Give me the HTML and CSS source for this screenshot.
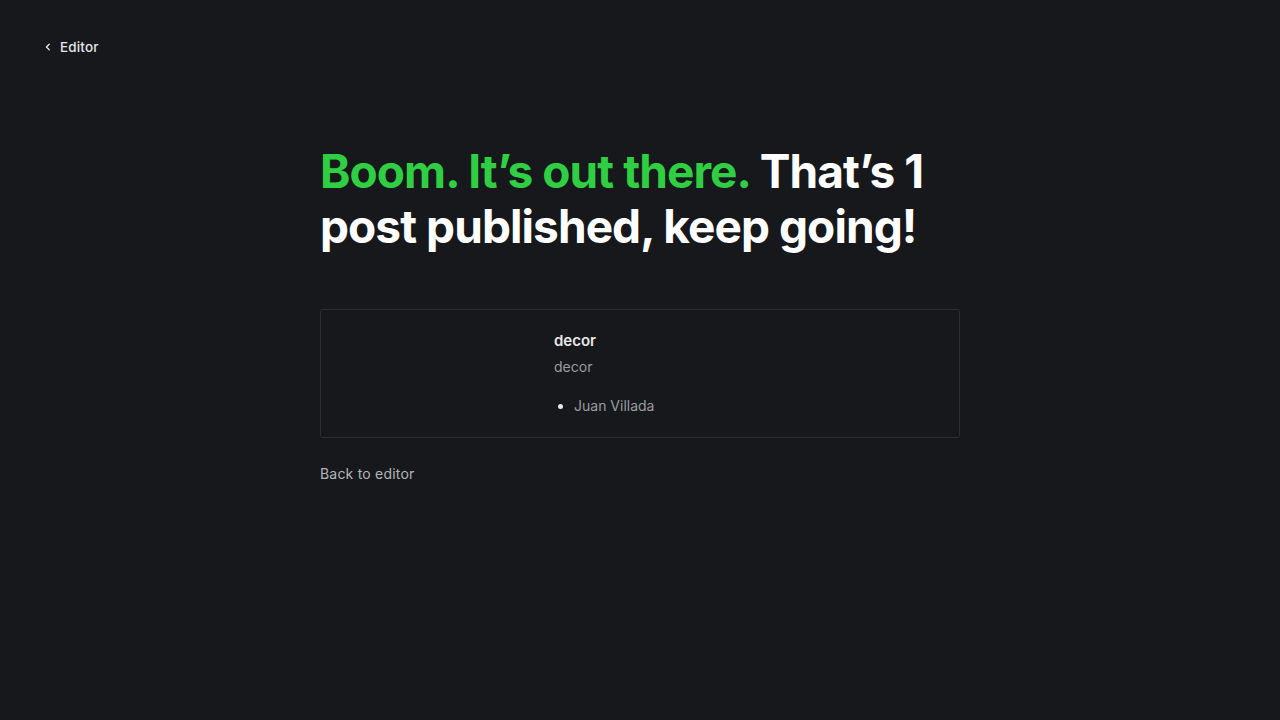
FILE: index.html
```html
<!DOCTYPE html>
<html lang="en">
<head>
<meta charset="utf-8">
<title>Published</title>
<link rel="stylesheet" href="styles.css">
</head>
<body>
  <header class="topbar">
    <a class="back-link" href="#">
      <svg class="chev" width="8" height="8" viewBox="0 0 8 8" aria-hidden="true"><path d="M5.2 1.2 2.4 4l2.8 2.8" fill="none" stroke="currentColor" stroke-width="1.3" stroke-linecap="round" stroke-linejoin="round"/></svg>
      <span>Editor</span>
    </a>
  </header>
  <main class="main">
    <h1 class="headline"><span class="accent">Boom. It’s out there.</span> <span class="rest">That’s 1 post published, keep going!</span></h1>
    <div class="card">
      <div class="card-thumb"></div>
      <div class="card-content">
        <div class="card-title">decor</div>
        <div class="card-desc">decor</div>
        <ul class="card-meta">
          <li>Juan Villada</li>
        </ul>
      </div>
    </div>
    <a class="back-editor" href="#">Back to editor</a>
  </main>
</body>
</html>
```
FILE: styles.css
```css
html, body {
  margin: 0;
  padding: 0;
  background: #17181c;
  height: 100%;
}
body {
  font-family: Inter, "Noto Sans", sans-serif;
  color: #fff;
}
a { text-decoration: none; }
.topbar {
  padding: 35px 0 0 44px;
  height: 21px;
}
.back-link {
  display: inline-flex;
  align-items: center;
  gap: 8px;
  color: #e6e6e6;
  font-size: 13.5px;
  font-weight: 500;
  letter-spacing: 0.15px;
  line-height: 18px;
}
.chev { display: block; }
.main {
  width: 640px;
  margin: 0 auto;
  padding-top: 88px;
}
.headline {
  margin: 0;
  font-size: 46px;
  line-height: 55px;
  font-weight: 700;
  letter-spacing: -0.02em;
  color: #fff;
}
.accent { color: #30cf43; }
.rest { color: #fff; }
.card {
  margin-top: 55px;
  border: 1px solid #2c2e33;
  border-radius: 3px;
  display: flex;
  min-height: 129px;
  box-sizing: border-box;
}
.card-thumb {
  width: 233px;
  flex: none;
}
.card-content {
  padding: 21px 20px 20px 0;
}
.card-title {
  font-size: 15px;
  font-weight: 600;
  line-height: 20px;
  color: #e8e8e8;
}
.card-desc {
  margin-top: 6px;
  font-size: 14px;
  line-height: 20px;
  color: #9a9ca1;
}
.card-meta {
  margin: 19px 0 0;
  padding-left: 20px;
  font-size: 14px;
  line-height: 20px;
  color: #9a9ca1;
}
.card-meta li::marker { color: #e8e8e8; }
.back-editor {
  display: inline-block;
  margin-top: 26px;
  font-size: 14px;
  line-height: 20px;
  letter-spacing: 0.2px;
  color: #b3b5b9;
}
```
